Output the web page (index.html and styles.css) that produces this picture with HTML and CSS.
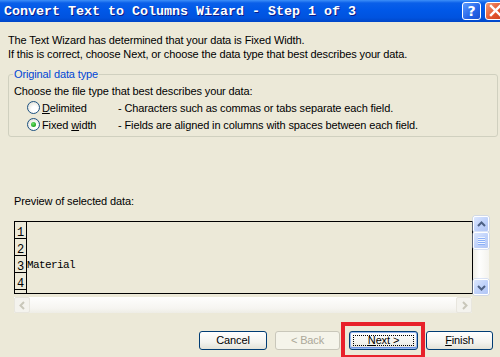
FILE: index.html
```html
<!DOCTYPE html>
<html>
<head>
	<link rel="stylesheet" href="styles.css">
</head>
<body>
    <div class="window">
        <div class="titlebar">
            <span class="title">Convert Text to Columns Wizard - Step 1 of 3</span>
            <span class="tb_button help">?</span>
            <span class="tb_button close">
                <svg width="13" height="13" viewBox="0 0 13 13"><path d="M2 2 L11 11 M11 2 L2 11" stroke="#fff" stroke-width="2.4" stroke-linecap="square"/></svg>
            </span>
        </div>

        <div class="content">
            <p class="intro">The Text Wizard has determined that your data is Fixed Width.<br>If this is correct, choose Next, or choose the data type that best describes your data.</p>

            <fieldset class="group">
                <legend>Original data type</legend>
                <div class="prompt">Choose the file type that best describes your data:</div>
                <div class="options">
                    <label class="radio"><span class="circle"></span><span><u>D</u>elimited</span></label>
                    <span class="desc">- Characters such as commas or tabs separate each field.</span>
                    <label class="radio"><span class="circle checked"></span><span>Fixed <u>w</u>idth</span></label>
                    <span class="desc">- Fields are aligned in columns with spaces between each field.</span>
                </div>
            </fieldset>

            <div class="preview_label">Preview of selected data:</div>

            <div class="preview">
                <div class="preview_main">
                    <div class="grid">
                        <div class="nums">
                            <div class="num">1</div>
                            <div class="num">2</div>
                            <div class="num">3</div>
                            <div class="num">4</div>
                        </div>
                        <div class="data">
                            <div class="cell"></div>
                            <div class="cell"></div>
                            <div class="cell">Material</div>
                            <div class="cell"></div>
                        </div>
                    </div>
                    <div class="hscroll">
                        <span class="sb_btn off"><svg width="9" height="9" viewBox="0 0 9 9"><path d="M6 1 L2.5 4.5 L6 8" fill="none" stroke="#c9c7ba" stroke-width="2"/></svg></span>
                        <span class="sb_btn off"><svg width="9" height="9" viewBox="0 0 9 9"><path d="M3 1 L6.5 4.5 L3 8" fill="none" stroke="#c9c7ba" stroke-width="2"/></svg></span>
                    </div>
                </div>
                <div class="vscroll">
                    <span class="sb_btn on"><svg width="9" height="9" viewBox="0 0 9 9"><path d="M1 6 L4.5 2.5 L8 6" fill="none" stroke="#4d6185" stroke-width="2"/></svg></span>
                    <span class="sb_btn on thumb"><span class="grip"></span></span>
                    <span class="track"></span>
                    <span class="sb_btn on"><svg width="9" height="9" viewBox="0 0 9 9"><path d="M1 3 L4.5 6.5 L8 3" fill="none" stroke="#4d6185" stroke-width="2"/></svg></span>
                </div>
            </div>

            <div class="buttons">
                <a href="#" class="button cancel">Cancel</a>
                <a href="#" class="button back disabled">&lt; Back</a>
                <span class="marked">
                    <a href="#" class="button next"><span class="focus"><u>N</u>ext &gt;</span></a>
                </span>
                <a href="#" class="button finish"><u>F</u>inish</a>
            </div>
        </div>
    </div>
</body>
</html>
```

FILE: styles.css
```css
		body {
			margin: 0;
			background-color: #ece9d8;
			font-family: "Liberation Sans", Arial, sans-serif;
			font-size: 11px;
			letter-spacing: -0.12px;
			color: #000;
		}
		a { text-decoration: none; color: #000; }
		u { text-decoration: underline; text-underline-offset: 1px; }
		.window {
			width: 500px;
			height: 357px;
			overflow: hidden;
		}
		.titlebar {
			height: 22px;
			display: flex;
			align-items: center;
			overflow: hidden;
			letter-spacing: 0;
			background: linear-gradient(#3d8ff8 0, #0a5fe9 3px, #0058e8 45%, #0053df 80%, #0046c8 100%);
		}
		.title {
			padding-left: 4px;
			font-family: "Liberation Mono", monospace;
			font-weight: bold;
			font-size: 13.33px;
			color: #fff;
			text-shadow: 1px 1px #0d1b86;
			white-space: pre;
		}
		.tb_button {
			height: 18px;
			width: 19px;
			box-sizing: border-box;
			border: 1px solid #fff;
			border-radius: 3px;
			display: flex;
			align-items: center;
			justify-content: center;
			margin-top: -1px;
		}
		.help {
			margin-left: auto;
			background: linear-gradient(135deg, #5c9bff, #2665e8 60%, #1c50d0);
			color: #fff;
			font-family: "DejaVu Sans", sans-serif;
			font-weight: bold;
			font-size: 14px;
		}
		.close {
			margin-left: 4px;
			margin-right: -6px;
			width: 21px;
			background: linear-gradient(135deg, #f29c7b, #e2542d 55%, #c8401e);
		}
		.content {
			padding-top: 11px;
		}
		.intro {
			margin: 0 0 0 8px;
			line-height: 14px;
		}
		.group {
			margin: 7px 2px 0 8px;
			padding: 0 6px 3px 4px;
			border: 1px solid #d0d0bf;
			border-radius: 3px;
		}
		.group legend {
			padding: 0 1px;
			color: #0046d5;
			line-height: 13px;
		}
		.prompt {
			margin: 3px 0 0 1px;
			line-height: 14px;
		}
		.options {
			margin: 1px 0 0 14px;
			display: grid;
			grid-template-columns: 91px auto;
			grid-auto-rows: 17px;
			align-items: center;
		}
		.radio {
			display: flex;
			align-items: center;
			gap: 2px;
		}
		.circle {
			width: 13px;
			height: 13px;
			box-sizing: border-box;
			border: 1px solid #1c5180;
			border-radius: 50%;
			background: radial-gradient(circle at 60% 65%, #fff 30%, #e4e4dc 75%, #d6d5cb);
			display: flex;
			align-items: center;
			justify-content: center;
		}
		.circle.checked::after {
			content: "";
			width: 5px;
			height: 5px;
			border-radius: 50%;
			background: radial-gradient(circle at 40% 35%, #6ce46c, #21a121 70%);
		}
		.preview_label {
			margin: 57px 0 0 14px;
			line-height: 14px;
		}
		.preview {
			margin: 8px 0 0 14px;
			display: flex;
			align-items: flex-start;
		}
		.preview_main {
			width: 459px;
			margin-top: 5px;
		}
		.grid {
			height: 73px;
			box-sizing: border-box;
			border: 1px solid #000;
			display: flex;
			overflow: hidden;
			letter-spacing: 0;
		}
		.nums {
			width: 11px;
			border-right: 1px solid #000;
			font-family: "Liberation Mono", monospace;
			font-size: 12px;
		}
		.num {
			height: 16px;
			border-bottom: 1px solid #000;
			padding-left: 2px;
			line-height: 22px;
		}
		.data {
			font-family: "Liberation Mono", monospace;
			font-size: 11px;
			letter-spacing: -0.6px;
		}
		.cell {
			height: 17px;
			line-height: 19px;
		}
		.hscroll {
			margin-top: 3px;
			width: 458px;
			height: 16px;
			display: flex;
			justify-content: space-between;
			background: linear-gradient(#fefefd, #f6f5f1 70%, #eeede6);
		}
		.sb_btn {
			width: 16px;
			height: 16px;
			box-sizing: border-box;
			border-radius: 2px;
			display: flex;
			align-items: center;
			justify-content: center;
		}
		.sb_btn.off {
			border: 1px solid #e8e6de;
			background-color: #f4f3ee;
		}
		.sb_btn.on {
			border: 1px solid #fff;
			background: linear-gradient(135deg, #dce7fe, #c1d3fb 50%, #b2c6f5);
			box-shadow: 0 0 0 0.5px #b8c9ef;
		}
		.vscroll {
			width: 16px;
			height: 79px;
			display: flex;
			flex-direction: column;
			background: linear-gradient(90deg, #eeede5, #fefefd 40%, #f4f3ee);
		}
		.thumb {
			height: 17px;
		}
		.grip {
			width: 7px;
			height: 8px;
			background: repeating-linear-gradient(#eef4fe 0, #eef4fe 1px, #8cb0f8 1px, #8cb0f8 2px);
		}
		.track {
			flex: 1;
		}
		.buttons {
			margin-top: 18px;
			padding-right: 7px;
			display: flex;
			justify-content: flex-end;
			align-items: center;
		}
		.button {
			height: 19px;
			box-sizing: border-box;
			border: 1px solid #003c74;
			border-radius: 3px;
			background: linear-gradient(#fff, #f3f3ef 60%, #e3e2d8);
			display: flex;
			align-items: center;
			justify-content: center;
			line-height: 13px;
		}
		.cancel { width: 68px; }
		.back { width: 65px; margin-left: 8px; }
		.marked {
			position: relative;
			margin-left: 9px;
		}
		.marked::after {
			content: "";
			position: absolute;
			top: -9px;
			left: -8px;
			right: -7px;
			bottom: -9px;
			border: 4px solid #e8212b;
		}
		.next {
			width: 69px;
			box-shadow: inset 0 0 0 1px #98b8f1, inset 0 -1px 0 1px #6c93e3;
			padding: 3px;
		}
		.focus {
			flex: 1;
			align-self: stretch;
			display: flex;
			align-items: center;
			justify-content: center;
			outline: 1px dotted #000;
			outline-offset: -1px;
		}
		.finish { width: 67px; margin-left: 8px; }
		.disabled {
			border-color: #c9c7ba;
			background: #f5f4ea;
			color: #aca899;
		}
```
